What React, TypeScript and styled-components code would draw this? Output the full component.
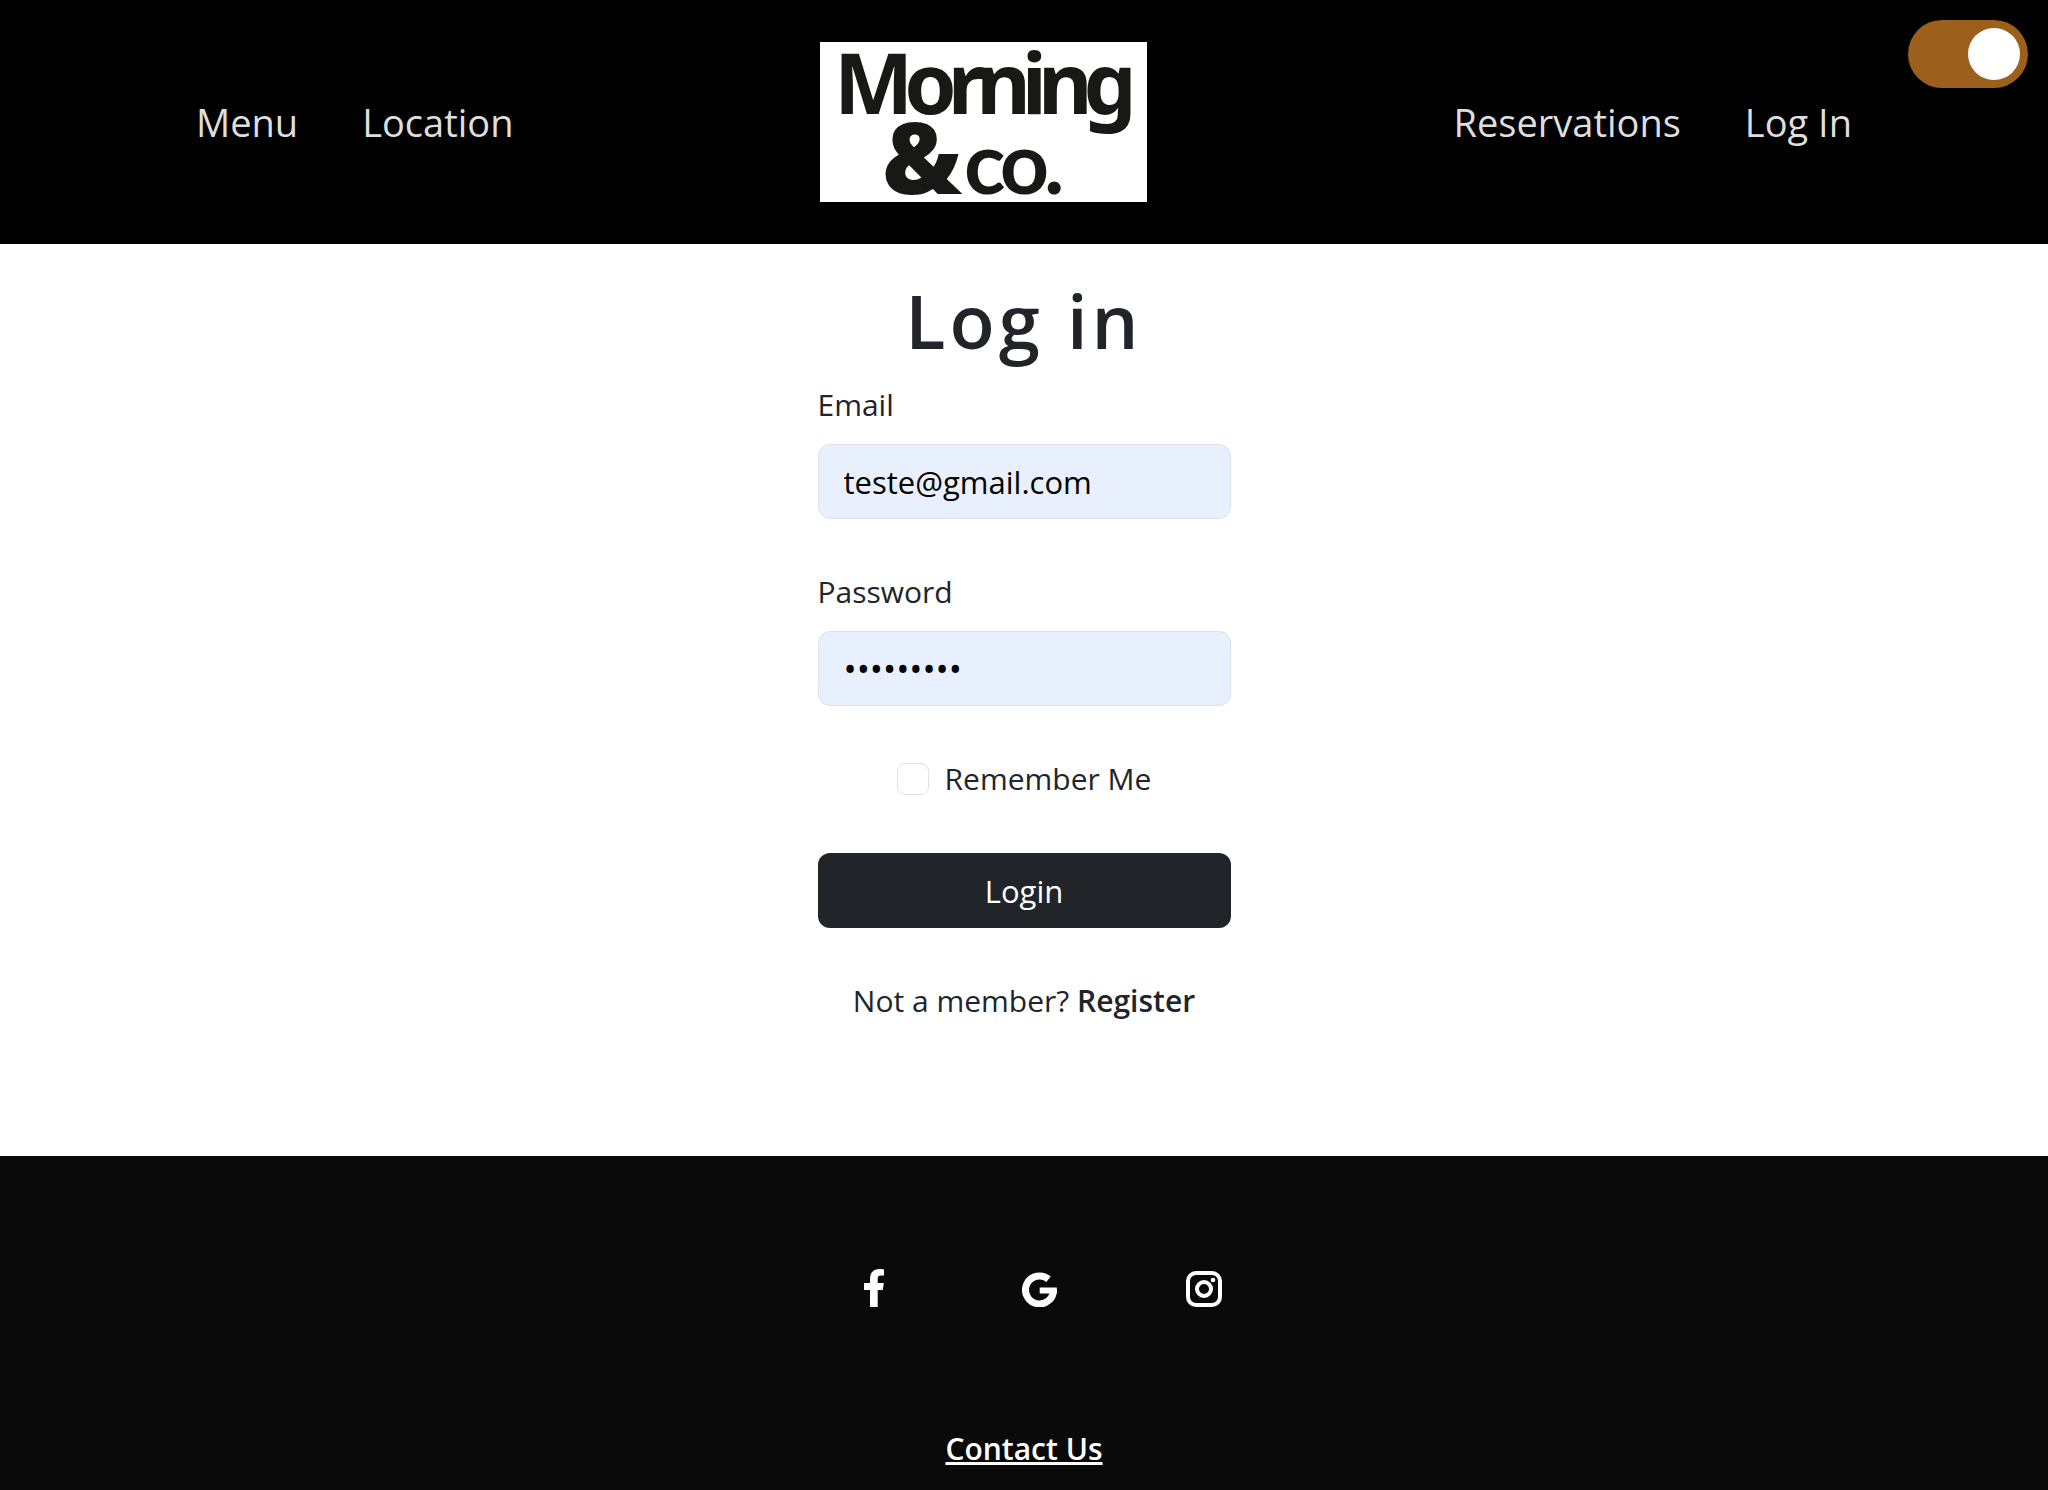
import React, { useState } from "react";
import styled, { createGlobalStyle } from "styled-components";

const GlobalStyle = createGlobalStyle`
  *, *::before, *::after { box-sizing: border-box; }
  body {
    margin: 0;
    background: #fff;
    color: #212529;
    font-family: "Segoe UI", "Open Sans", "Noto Sans", sans-serif;
    font-size: 30px;
    line-height: 48px;
  }
`;

const Page = styled.div`
  display: flex;
  flex-direction: column;
  min-height: 100vh;
`;

const Header = styled.header`
  position: relative;
  display: flex;
  align-items: center;
  justify-content: space-between;
  min-height: 244px;
  padding: 0 164px;
  background: #000;
`;

const NavGroup = styled.nav`
  display: flex;
`;

const NavLink = styled.a`
  padding: 0 32px;
  color: #dedede;
  font-size: 38px;
  line-height: 60px;
  text-decoration: none;
`;

const LogoLink = styled.a`
  display: block;
  width: 327px;
  height: 160px;
  background: #fff;
`;

const LogoSvg = styled.svg`
  display: block;
  overflow: visible;
`;

const LogoText = styled.text<{ $face: string; $weight: number }>`
  font-family: ${(p) => p.$face}, sans-serif;
  font-weight: ${(p) => p.$weight};
  fill: #181816;
`;

const Switch = styled.label`
  position: absolute;
  top: 20px;
  right: 20px;
  display: flex;
`;

const SwitchInput = styled.input`
  appearance: none;
  display: flex;
  align-items: center;
  width: 120px;
  height: 68px;
  margin: 0;
  padding: 8px;
  border-radius: 34px;
  background: #ccc;
  cursor: pointer;

  &::before {
    content: "";
    width: 52px;
    height: 52px;
    border-radius: 50%;
    background: #fff;
  }

  &:checked {
    justify-content: flex-end;
    background: #9c601c;
  }
`;

const Main = styled.main`
  display: flex;
  flex: 1;
  flex-direction: column;
  align-items: center;
  padding: 32px 24px 120px;
`;

const Title = styled.h1`
  margin: 0 0 15px;
  font-size: 74px;
  font-weight: 600;
  line-height: 90px;
  letter-spacing: 4px;
`;

const Form = styled.form`
  display: flex;
  flex-direction: column;
  width: 100%;
  max-width: 413px;
`;

const Field = styled.div`
  display: flex;
  flex-direction: column;
  gap: 15px;
  margin-bottom: 49px;
`;

const FieldInput = styled.input`
  width: 100%;
  height: 75px;
  padding: 0 25px;
  border: 1px solid #dee2e6;
  border-radius: 12px;
  background: #e8f0fe;
  color: #000;
  font: inherit;
  font-size: 31px;

  &[type="password"] {
    font-size: 35px;
  }
`;

const CheckRow = styled.div`
  display: flex;
  align-items: center;
  justify-content: center;
  gap: 16px;
  margin-bottom: 50px;
`;

const Checkbox = styled.input`
  appearance: none;
  width: 32px;
  height: 32px;
  margin: 0;
  border: 1px solid #dee2e6;
  border-radius: 8px;
  background: #fff;

  &:checked {
    background: #212529;
  }
`;

const SubmitButton = styled.button`
  height: 75px;
  margin-bottom: 49px;
  border: 0;
  border-radius: 12px;
  background: #212529;
  color: #fff;
  font: inherit;
  font-size: 31px;
  cursor: pointer;
`;

const Note = styled.p`
  margin: 0;
  text-align: center;
`;

const RegisterLink = styled.a`
  color: inherit;
  font-weight: 600;
  text-decoration: none;
`;

const Footer = styled.footer`
  display: flex;
  flex-direction: column;
  align-items: center;
  min-height: 334px;
  padding: 113px 24px 16px;
  background: #0a0a0a;
  color: #fff;
`;

const SocialList = styled.div`
  display: flex;
  gap: 129px;
  margin-bottom: 118px;
  padding-left: 30px;
`;

const SocialLink = styled.a`
  display: flex;
  align-items: flex-end;
  justify-content: center;
  width: 36px;
  height: 38px;
  color: #fff;
`;

const ContactLink = styled.a`
  color: #fff;
  font-weight: 600;
  text-decoration: underline;
  text-decoration-thickness: 3px;
`;

function Logo() {
  return (
    <LogoSvg width="327" height="160" viewBox="0 0 327 160" role="img" aria-label="Morning & co.">
      <LogoText $face="Noto Sans" $weight={700} x="14" y="72" fontSize="84" letterSpacing="-9">Morning</LogoText>
      <LogoText $face="Noto Sans" $weight={900} x="62" y="152" fontSize="100">&amp;</LogoText>
      <LogoText $face="Lato" $weight={700} x="144" y="152" fontSize="86" letterSpacing="-5">co.</LogoText>
    </LogoSvg>
  );
}

function FacebookIcon() {
  return (
    <svg width="20" height="38" viewBox="0 0 20 38" fill="currentColor" aria-hidden="true">
      <path d="M6 38V21H0V14H6V10C6 3.500 9.500 0 15.500 0C17.500 0 19 .2 20 .5V6.500H17C14.500 6.500 13.700 7.500 13.700 9.800V14H19.800L18.800 21H13.700V38Z" />
    </svg>
  );
}

function GoogleIcon() {
  return (
    <svg width="35" height="35" viewBox="0 0 35 35" fill="none" stroke="currentColor" aria-hidden="true">
      <path d="M26.500 7.200A14 14 0 1 0 31.500 17.500" strokeWidth="7" />
      <path d="M17.700 18.500H34.800" strokeWidth="6" />
    </svg>
  );
}

function InstagramIcon() {
  return (
    <svg width="36" height="36" viewBox="0 0 36 36" fill="none" stroke="currentColor" strokeWidth="4" aria-hidden="true">
      <rect x="2" y="2" width="32" height="32" rx="8" />
      <circle cx="18" cy="18" r="7" />
      <circle cx="27" cy="9" r="2.300" fill="currentColor" stroke="none" />
    </svg>
  );
}

export default function App() {
  const [light, setLight] = useState(true);
  const [email, setEmail] = useState("teste@gmail.com");
  const [password, setPassword] = useState("teste1234");
  const [remember, setRemember] = useState(false);

  return (
    <Page>
      <GlobalStyle />
      <Header>
        <NavGroup aria-label="Restaurant">
          <NavLink href="#menu">Menu</NavLink>
          <NavLink href="#location">Location</NavLink>
        </NavGroup>
        <LogoLink href="#home">
          <Logo />
        </LogoLink>
        <NavGroup aria-label="Account">
          <NavLink href="#reservations">Reservations</NavLink>
          <NavLink href="#login">Log In</NavLink>
        </NavGroup>
        <Switch>
          <SwitchInput
            type="checkbox"
            role="switch"
            aria-label="Theme"
            checked={light}
            onChange={(e) => setLight(e.target.checked)}
          />
        </Switch>
      </Header>
      <Main>
        <Title>Log in</Title>
        <Form onSubmit={(e) => e.preventDefault()}>
          <Field>
            <label htmlFor="email">Email</label>
            <FieldInput id="email" type="email" value={email} onChange={(e) => setEmail(e.target.value)} />
          </Field>
          <Field>
            <label htmlFor="password">Password</label>
            <FieldInput
              id="password"
              type="password"
              value={password}
              onChange={(e) => setPassword(e.target.value)}
            />
          </Field>
          <CheckRow>
            <Checkbox
              id="remember"
              type="checkbox"
              checked={remember}
              onChange={(e) => setRemember(e.target.checked)}
            />
            <label htmlFor="remember">Remember Me</label>
          </CheckRow>
          <SubmitButton type="submit">Login</SubmitButton>
          <Note>
            Not a member? <RegisterLink href="#register">Register</RegisterLink>
          </Note>
        </Form>
      </Main>
      <Footer>
        <SocialList>
          <SocialLink href="#facebook" aria-label="Facebook"><FacebookIcon /></SocialLink>
          <SocialLink href="#google" aria-label="Google"><GoogleIcon /></SocialLink>
          <SocialLink href="#instagram" aria-label="Instagram"><InstagramIcon /></SocialLink>
        </SocialList>
        <ContactLink href="#contact">Contact Us</ContactLink>
      </Footer>
    </Page>
  );
}
